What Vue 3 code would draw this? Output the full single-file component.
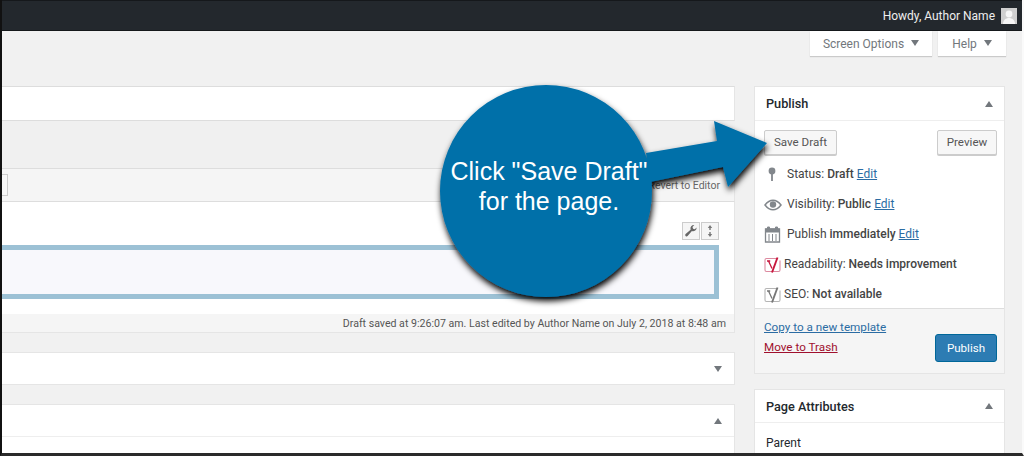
<script setup>
const rows = [
  { icon: 'pin', label: 'Status:', value: 'Draft', edit: true },
  { icon: 'eye', label: 'Visibility:', value: 'Public', edit: true },
  { icon: 'cal', label: 'Publish', value: 'immediately', edit: true },
  { icon: 'yred', label: 'Readability:', value: 'Needs improvement', edit: false },
  { icon: 'ygray', label: 'SEO:', value: 'Not available', edit: false }
]
</script>

<template>
  <div class="page">
    <header class="topbar">
      <span class="howdy">Howdy, Author Name</span>
      <span class="avatar">
        <svg width="16" height="16" viewBox="0 0 16 16"><rect width="16" height="16" fill="#cfcfcf"/><circle cx="8" cy="6" r="3.400" fill="#f6f6f6"/><path d="M2 16c0-4 3-6 6-6s6 2 6 6z" fill="#f6f6f6"/></svg>
      </span>
    </header>

    <div class="tabs">
      <div class="tab tab-wide">Screen Options <i class="caret"></i></div>
      <div class="tab tab-help">Help <i class="caret"></i></div>
    </div>

    <div class="columns">
      <main class="main">
        <div class="title-box"></div>
        <div class="band"></div>
        <div class="toolbar">
          <span class="stub"></span>
          <span class="revert">Revert to Editor</span>
        </div>
        <div class="editor">
          <div class="tools">
            <span class="tool">
              <svg width="14" height="14" viewBox="0 0 14 14"><path d="M12.600 3.400a3.600 3.600 0 0 1-4.700 3.700L3.600 12a1.400 1.400 0 0 1-2-2l5-4.300A3.600 3.600 0 0 1 10.300 1L8.500 3l.6 1.800 1.700.5z" fill="#666"/></svg>
            </span>
            <span class="tool">
              <svg width="14" height="14" viewBox="0 0 14 14"><path d="M7 1l2.200 3H7.700v2H6.300V4H4.800zM7 13l-2.200-3h1.500V8h1.400v2h1.500z" fill="#777"/></svg>
            </span>
          </div>
          <div class="block"></div>
        </div>
        <div class="statusbar">Draft saved at 9:26:07 am. Last edited by Author Name on July 2, 2018 at 8:48 am</div>
        <div class="meta-box"><i class="arrow down"></i></div>
        <div class="meta-box open">
          <div class="meta-head"><i class="arrow up"></i></div>
        </div>
      </main>

      <aside class="side">
        <section class="publish">
          <div class="box-head"><h2>Publish</h2><i class="arrow up"></i></div>
          <div class="actions">
            <span class="btn btn-save">Save Draft</span>
            <span class="btn btn-prev">Preview</span>
          </div>
          <ul class="rows">
            <li v-for="row in rows" :key="row.icon" class="row">
              <svg v-if="row.icon === 'pin'" class="ico" width="20" height="20" viewBox="0 0 20 20"><circle cx="8" cy="7" r="3.400" fill="#82878c"/><rect x="7.100" y="8" width="1.800" height="9" fill="#82878c"/></svg>
              <svg v-else-if="row.icon === 'eye'" class="ico" width="20" height="20" viewBox="0 0 20 20"><path d="M1 11c2.500-3.300 5-4.800 8-4.800s5.500 1.500 8 4.800c-2.500 3.300-5 4.800-8 4.800S3.500 14.300 1 11z" fill="none" stroke="#82878c" stroke-width="1.500"/><circle cx="9" cy="10.500" r="3.200" fill="#82878c"/></svg>
              <svg v-else-if="row.icon === 'cal'" class="ico" width="20" height="20" viewBox="0 0 20 20"><path d="M1.500 5h14v13h-14z" fill="none" stroke="#82878c" stroke-width="1.300"/><path d="M1.500 5h14v3h-14zM5 10v7M8.500 10v7M12 10v7M3.500 3h2v3h-2zM11.500 3h2v3h-2z" fill="#82878c" stroke="#82878c" stroke-width="1"/></svg>
              <svg v-else class="ico ico-y" width="18" height="20" viewBox="0 0 18 20">
                <path d="M13 4.500H2.500A1.500 1.500 0 0 0 1 6v10A1.500 1.500 0 0 0 2.500 17.500H14.500A1.500 1.500 0 0 0 16 16V6.500" fill="none" :stroke="row.icon === 'yred' ? '#dc8aa0' : '#b5b5b5'" stroke-width="1.100"/>
                <path d="M3 7H6.200M4.500 7L8 14.500" fill="none" :stroke="row.icon === 'yred' ? '#c7173d' : '#777'" stroke-width="1.300"/>
                <path d="M13.500 3.500L8 18.500" fill="none" :stroke="row.icon === 'yred' ? '#c7173d' : '#777'" stroke-width="1.900"/>
              </svg>
              <span class="row-text">{{ row.label }} <b>{{ row.value }}</b><a v-if="row.edit" class="link edit">Edit</a></span>
            </li>
          </ul>
          <footer class="pub-foot">
            <div class="foot-links">
              <a class="link">Copy to a new template</a>
              <a class="trash">Move to Trash</a>
            </div>
            <span class="primary">Publish</span>
          </footer>
        </section>

        <section class="attrs">
          <div class="box-head"><h2>Page Attributes</h2><i class="arrow up"></i></div>
          <p class="parent">Parent</p>
        </section>
      </aside>
    </div>

    <svg class="callout-art" width="1024" height="456" viewBox="0 0 1024 456">
      <defs>
        <filter id="drop" x="-20%" y="-20%" width="140%" height="140%">
          <feDropShadow dx="1" dy="4" stdDeviation="3" flood-color="#000" flood-opacity="1"/>
        </filter>
      </defs>
      <g filter="url(#drop)" fill="#0070a9">
        <path d="M646 153L717 141L714 121L767 143L728 187L723 167L650 182z"/>
        <circle cx="546" cy="191" r="106"/>
      </g>
    </svg>
    <div class="callout-text">Click "Save Draft"<br>for the page.</div>
  </div>
</template>

<style>
html, body { margin: 0; padding: 0; background: #f1f1f1; }
</style>

<style scoped>
.page {
  position: relative;
  width: 1024px;
  height: 456px;
  overflow: hidden;
  box-sizing: border-box;
  background: #f1f1f1;
  border-left: 2px solid #111;
  border-right: 2px solid #fafafa;
  border-bottom: 3px solid #2a2a2a;
  font-family: Roboto, "Open Sans", sans-serif;
  font-size: 12px;
  color: #444;
}
.topbar {
  height: 31px;
  box-sizing: border-box;
  margin-right: -2px;
  background: #23282d;
  border-top: 1px solid #15181b;
  border-bottom: 1px solid #15181b;
  display: flex;
  justify-content: flex-end;
  align-items: center;
  gap: 6px;
  padding-right: 7px;
  color: #eee;
  font-size: 12px;
}
.avatar { display: flex; }
.tabs {
  display: flex;
  justify-content: flex-end;
  gap: 6px;
  padding-right: 16px;
  height: 25px;
}
.tab {
  height: 25px;
  box-sizing: border-box;
  background: #fff;
  box-shadow: 0 1px 1px rgba(0,0,0,.16);
  color: #72777c;
  display: flex;
  align-items: center;
  justify-content: center;
  gap: 7px;
  font-size: 12px;
}
.tab-wide { width: 122px; }
.tab-help { width: 68px; }
.caret {
  width: 0; height: 0;
  border-left: 4px solid transparent;
  border-right: 4px solid transparent;
  border-top: 6px solid #72777c;
  margin-top: -2px;
}
.columns {
  display: flex;
  gap: 19px;
  margin-top: 30px;
}
.main { width: 733px; flex: none; }
.title-box {
  height: 33px;
  background: #fff;
  border-top: 1px solid #ddd;
  border-bottom: 1px solid #ddd;
  border-right: 1px solid #e5e5e5;
}
.band { height: 47px; background: #f0f0f0; border-bottom: 1px solid #ddd; }
.toolbar {
  height: 33px;
  box-sizing: border-box;
  background: #f5f5f5;
  border-bottom: 1px solid #ddd;
  border-right: 1px solid #e5e5e5;
  display: flex;
  align-items: center;
  justify-content: space-between;
  padding-right: 14px;
}
.stub {
  width: 6px;
  height: 22px;
  box-sizing: border-box;
  border: 1px solid #ccc;
  border-left: 0;
  background: #f7f7f7;
}
.revert { font-size: 10.500px; color: #666; }
.editor {
  height: 112px;
  box-sizing: border-box;
  background: #fff;
  border-right: 1px solid #e5e5e5;
  padding: 20px 15px 0 0;
  display: flex;
  flex-direction: column;
  align-items: flex-end;
}
.tools { display: flex; gap: 1px; height: 23px; }
.tool {
  width: 18px;
  height: 18px;
  box-sizing: border-box;
  border: 1px solid #ccc;
  background: #f5f5f5;
  display: flex;
  align-items: center;
  justify-content: center;
}
.block {
  width: 100%;
  height: 54px;
  flex: none;
  box-sizing: border-box;
  background: #f8f8fc;
  border: 5px solid #9cc1d5;
  border-left: 0;
}
.statusbar {
  height: 19px;
  box-sizing: border-box;
  background: #f5f5f5;
  border-right: 1px solid #e5e5e5;
  border-bottom: 1px solid #e5e5e5;
  text-align: right;
  padding-right: 8px;
  font-size: 10.600px;
  line-height: 20px;
  color: #555;
  white-space: nowrap;
}
.meta-box {
  height: 33px;
  box-sizing: border-box;
  margin-top: 19px;
  background: #fff;
  border: 1px solid #e5e5e5;
  border-left: 0;
  display: flex;
  align-items: center;
  justify-content: flex-end;
  padding-right: 12px;
}
.meta-box.open {
  display: block;
  height: 60px;
  padding-right: 0;
  border-bottom: 0;
}
.meta-head {
  height: 32px;
  box-sizing: border-box;
  border-bottom: 1px solid #eee;
  display: flex;
  align-items: center;
  justify-content: flex-end;
  padding-right: 12px;
}
.arrow {
  width: 0; height: 0;
  border-left: 4px solid transparent;
  border-right: 4px solid transparent;
}
.arrow.down { border-top: 6px solid #72777c; }
.arrow.up { border-bottom: 6px solid #72777c; }
.side { width: 251px; flex: none; }
.publish {
  box-sizing: border-box;
  height: 288px;
  background: #fff;
  border: 1px solid #e5e5e5;
  display: flex;
  flex-direction: column;
}
.box-head {
  height: 34px;
  flex: none;
  box-sizing: border-box;
  border-bottom: 1px solid #eee;
  display: flex;
  align-items: center;
  justify-content: space-between;
  padding: 0 11px;
}
.box-head h2 { margin: 0; font-size: 12.700px; font-weight: 500; color: #23282d; }
.actions {
  display: flex;
  justify-content: space-between;
  padding: 9px 7px 0 9px;
}
.btn {
  height: 25px;
  box-sizing: border-box;
  border: 1px solid #ccc;
  border-radius: 2px;
  background: #f7f7f7;
  box-shadow: 0 1px 0 #ccc;
  color: #555;
  font-size: 11.600px;
  line-height: 23px;
  text-align: center;
}
.btn-save { width: 73px; }
.btn-prev { width: 60px; }
.rows {
  list-style: none;
  margin: 0;
  padding: 4px 0 0;
  flex: 1;
  min-height: 0;
}
.row {
  height: 30px;
  display: flex;
  align-items: center;
  white-space: nowrap;
}
.ico { flex: none; margin-left: 9px; margin-right: 3px; }
.ico-y { margin-right: 2px; }
.row-text { font-size: 12px; }
.row b { font-weight: 500; color: #444; }
.link { color: #2b6ca3; text-decoration: underline; }
.edit { margin-left: 3px; }
.pub-foot {
  height: 65px;
  flex: none;
  box-sizing: border-box;
  background: #f5f5f5;
  border-top: 1px solid #ddd;
  display: flex;
  justify-content: space-between;
  padding: 10px 7px 0 9px;
  font-size: 11.700px;
}
.foot-links { display: flex; flex-direction: column; gap: 3px; line-height: 17px; }
.trash { color: #a0102e; text-decoration: underline; }
.primary {
  align-self: flex-start;
  margin-top: 15px;
  width: 62px;
  height: 28px;
  box-sizing: border-box;
  border: 1px solid #006799;
  border-radius: 3px;
  background: #2d7cb3;
  color: #fff;
  text-align: center;
  line-height: 26px;
  font-size: 11.600px;
}
.attrs {
  margin-top: 15px;
  height: 80px;
  box-sizing: border-box;
  background: #fff;
  border: 1px solid #e5e5e5;
}
.attrs .box-head { height: 33px; }
.parent { margin: 13px 0 0 11px; font-weight: 400; font-size: 12px; color: #23282d; }
.callout-art {
  position: absolute;
  left: -2px;
  top: 0;
  pointer-events: none;
}
.callout-text {
  position: absolute;
  left: 439px;
  top: 156px;
  width: 216px;
  text-align: center;
  font-family: "Liberation Sans", Arial, sans-serif;
  font-size: 25px;
  line-height: 30px;
  color: #fff;
}
</style>
